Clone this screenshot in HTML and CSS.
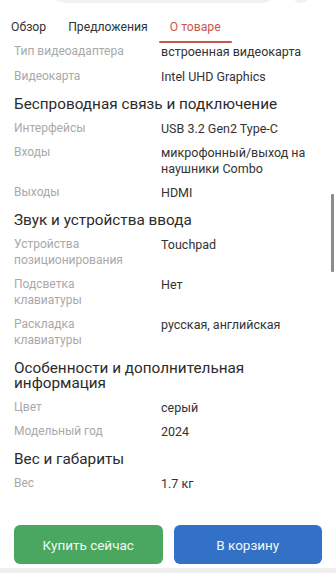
FILE: index.html
```html
<!DOCTYPE html>
<html lang="ru">
<head>
<meta charset="utf-8">
<link rel="stylesheet" href="styles.css">
</head>
<body>
<div class="page">
  <div class="topstrip">
    <div class="search"></div>
    <div class="circle"></div>
  </div>
  <nav class="tabs">
    <div class="tab">Обзор</div>
    <div class="tab">Предложения</div>
    <div class="tab active">О товаре</div>
  </nav>
  <main class="content">
    <div class="row first"><div class="label">Тип видеоадаптера</div><div class="value">встроенная видеокарта</div></div>
    <div class="row"><div class="label">Видеокарта</div><div class="value">Intel UHD Graphics</div></div>
    <h2 class="heading">Беспроводная связь и подключение</h2>
    <div class="row"><div class="label">Интерфейсы</div><div class="value">USB 3.2 Gen2 Type-C</div></div>
    <div class="row"><div class="label">Входы</div><div class="value">микрофонный/выход на наушники Combo</div></div>
    <div class="row"><div class="label">Выходы</div><div class="value">HDMI</div></div>
    <h2 class="heading">Звук и устройства ввода</h2>
    <div class="row"><div class="label">Устройства позиционирования</div><div class="value">Touchpad</div></div>
    <div class="row"><div class="label">Подсветка клавиатуры</div><div class="value">Нет</div></div>
    <div class="row"><div class="label">Раскладка клавиатуры</div><div class="value">русская, английская</div></div>
    <h2 class="heading">Особенности и дополнительная информация</h2>
    <div class="row"><div class="label">Цвет</div><div class="value">серый</div></div>
    <div class="row"><div class="label">Модельный год</div><div class="value">2024</div></div>
    <h2 class="heading">Вес и габариты</h2>
    <div class="row"><div class="label">Вес</div><div class="value">1.7 кг</div></div>
  </main>
  <footer class="footer">
    <button class="btn buy">Купить сейчас</button>
    <button class="btn cart">В корзину</button>
  </footer>
  <div class="bottomstrip"></div>
  <div class="scrollbar"></div>
</div>
</body>
</html>
```
FILE: styles.css
```css
* { box-sizing: border-box; }
html, body { margin: 0; padding: 0; background: #fff; }
body { font-family: Roboto, "Noto Sans", sans-serif; color: #333; }
.page {
  position: relative;
  width: 336px;
  height: 573px;
  display: flex;
  flex-direction: column;
  overflow: hidden;
}
.topstrip {
  height: 3px;
  display: flex;
  align-items: flex-end;
  overflow: hidden;
  flex: none;
}
.search {
  margin-left: 50px;
  width: 227px;
  height: 30px;
  flex: none;
  border-radius: 15px;
  background: #f1f1f1;
}
.circle {
  margin-left: 14px;
  width: 20px;
  height: 30px;
  flex: none;
  border-radius: 10px;
  background: #f1f1f1;
}
.tabs {
  display: flex;
  height: 40px;
  flex: none;
}
.tab {
  padding: 16px 11px 0;
  font-size: 12.2px;
  line-height: 16px;
  color: #333;
  position: relative;
}
.tab.active { color: #c8574b; }
.tab.active::after {
  content: "";
  position: absolute;
  left: 0;
  right: 0;
  bottom: 0;
  height: 2.5px;
  border-radius: 2px;
  background: #c8574b;
}
.content {
  flex: 1;
  overflow: hidden;
  padding: 0 14px;
}
.row {
  display: flex;
  padding: 4.5px 0 4.5px;
  line-height: 15.5px;
}
.row.first { padding-top: 1px; }
.label {
  width: 147px;
  flex: none;
  color: #a9a9a9;
  font-size: 12px;
  padding-right: 29px;
}
.value {
  flex: 1;
  color: #333;
  font-size: 12.5px;
  padding-right: 8px;
}
.heading {
  margin: 0;
  padding: 8px 0 4.5px;
  font-size: 15.3px;
  line-height: 15px;
  font-weight: 400;
  color: #2b2b2b;
}
.footer {
  flex: none;
  display: flex;
  gap: 11px;
  padding: 0 14px 4px;
}
.btn {
  flex: 1;
  height: 39px;
  border: none;
  border-radius: 6px;
  font-family: Roboto, "Noto Sans", sans-serif;
  font-size: 13.5px;
  color: #f4f8f4;
}
.buy { background: #4aa75f; }
.cart { background: #3271c5; }
.bottomstrip {
  flex: none;
  height: 5px;
  background: #efefef;
}
.scrollbar {
  position: absolute;
  left: 331px;
  top: 194px;
  width: 3px;
  height: 78px;
  background: #8c8c8c;
  border-radius: 1px;
}
```
